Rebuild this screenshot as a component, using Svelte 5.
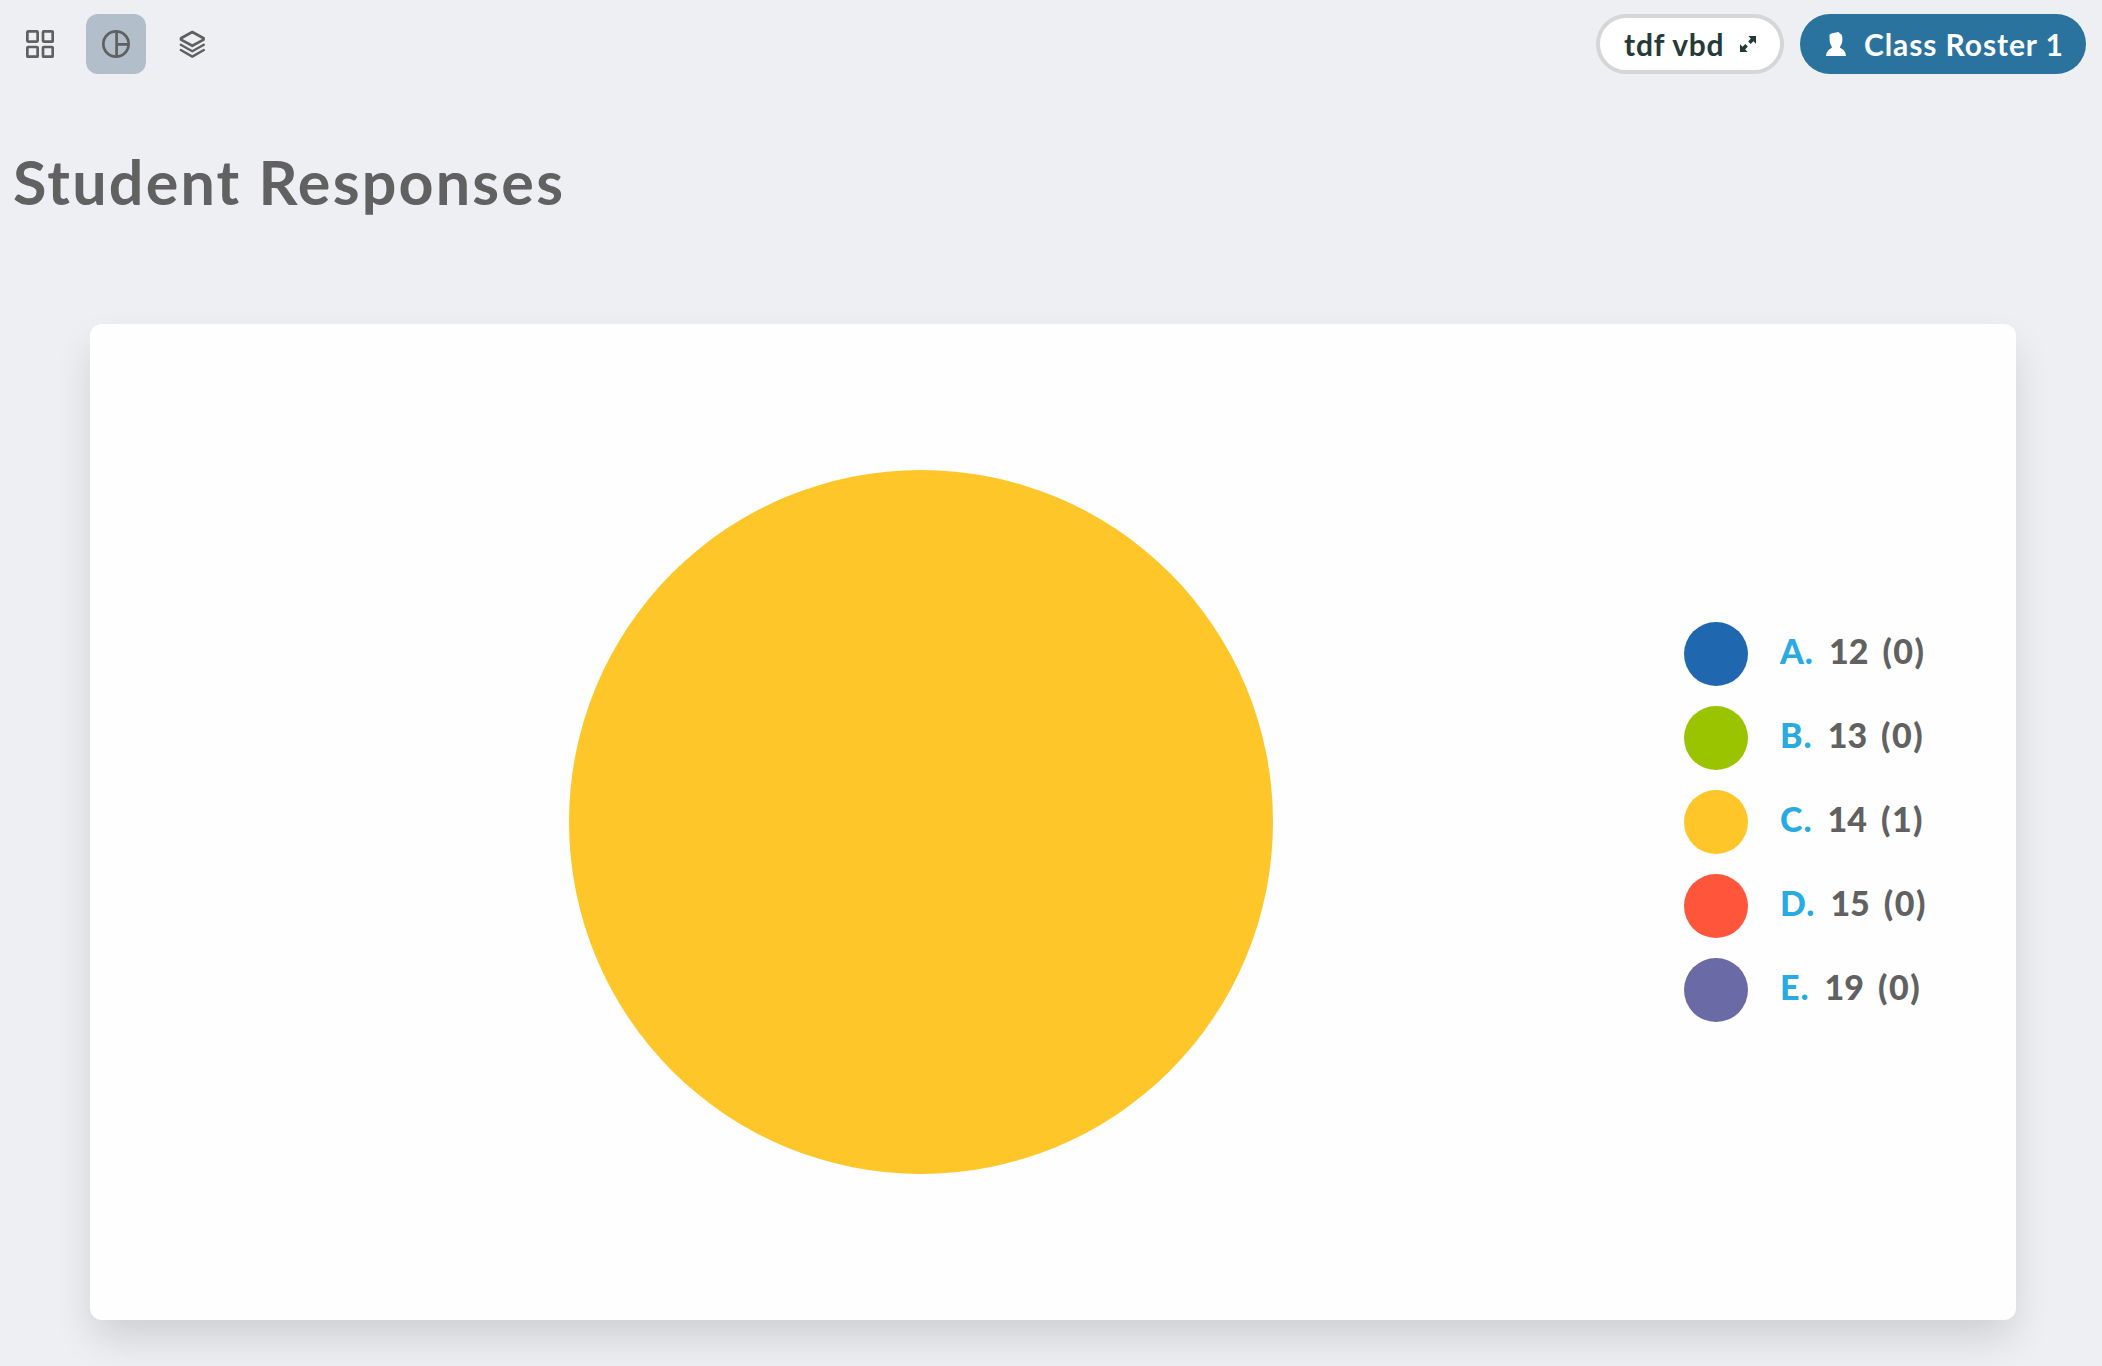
<script lang="ts">
  interface Answer {
    letter: string;
    label: string;
    count: number;
    color: string;
  }

  const roomCode = 'tdf vbd';
  const rosterName = 'Class Roster 1';

  const answers: Answer[] = [
    { letter: 'A', label: '12', count: 0, color: '#1f68b0' },
    { letter: 'B', label: '13', count: 0, color: '#9ac400' },
    { letter: 'C', label: '14', count: 1, color: '#ffc62a' },
    { letter: 'D', label: '15', count: 0, color: '#ff553b' },
    { letter: 'E', label: '19', count: 0, color: '#6a6aa6' }
  ];

  const views = ['grid', 'chart', 'stack'];
  let view = $state('chart');

  const total = $derived(answers.reduce((sum, a) => sum + a.count, 0));

  function pieBackground(rows: Answer[], sum: number): string {
    let at = 0;
    const stops = rows
      .filter((row) => row.count > 0)
      .map((row) => {
        const start = at;
        at += (row.count / sum) * 100;
        return `${row.color} ${start}% ${at}%`;
      });
    return `conic-gradient(${stops.join(', ')})`;
  }
</script>

<div class="page">
  <header class="topbar">
    <nav class="views">
      {#each views as name}
        <button class="view" class:active={view === name} aria-label={name} onclick={() => (view = name)}>
          <svg width="28" height="28" viewBox="0 0 28 28" fill="none" stroke="#606060" stroke-width="2.7">
            {#if name === 'grid'}
              <rect x="1.35" y="1.35" width="10.3" height="10.3" rx="0.8" />
              <rect x="17" y="1.35" width="9.7" height="10.3" rx="0.8" />
              <rect x="1.35" y="17" width="10.3" height="9.7" rx="0.8" />
              <rect x="17" y="17" width="9.7" height="9.7" rx="0.8" />
            {:else if name === 'chart'}
              <circle cx="14" cy="14" r="12.65" />
              <path d="M14.6 1.5v25M14.6 14.3h12" />
            {:else}
              <g stroke-linejoin="round" stroke-linecap="round">
                <path d="M14.3 2L25.6 8.2V9.6L14.3 15.8L3 9.6V8.2Z" />
                <path d="M2.8 14.8L14.3 21.2L25.8 14.8" stroke-width="2.4" />
                <path d="M2.8 20L14.3 26.6L25.8 20" stroke-width="2.4" />
              </g>
            {/if}
          </svg>
        </button>
      {/each}
    </nav>
    <div class="pills">
      <button class="pill room">
        <span class="room-code">{roomCode}</span>
        <svg width="16" height="16" viewBox="0 0 16 16" fill="#263a3a">
          <path d="M8.3 0H16V7.700L13.500 5.200L10.600 8L8.200 5.600L10.800 2.500Z" />
          <path d="M7.700 16H0V8.300L2.500 10.800L5.400 8L7.800 10.400L5.200 13.500Z" />
        </svg>
      </button>
      <button class="pill roster">
        <svg width="20" height="24" viewBox="0 0 20 24" fill="#fff">
          <path d="M3.500 3C5 .8 9 1 12.500 0L14 1.500C16.500 2.500 16.500 5 16.300 9.500C16 12 14.500 13.500 13.800 15.500C17 17.500 19.500 18.500 20 24H0C.5 18.500 3.500 17.500 6 15.500C5.500 13.500 4 12 3.700 9.500Z" />
        </svg>
        <span class="roster-name">{rosterName}</span>
      </button>
    </div>
  </header>

  <h1>Student Responses</h1>

  <section class="card">
    <div class="chart">
      <div class="pie" style:background={pieBackground(answers, total)}></div>
    </div>
    <ul class="legend">
      {#each answers as answer}
        <li>
          <span class="dot" style:background={answer.color}></span>
          <span class="letter">{answer.letter}.</span>
          <span class="label">{answer.label}</span>
          <span class="count">({answer.count})</span>
        </li>
      {/each}
    </ul>
  </section>
</div>

<style>
  :global(body) {
    background: #eeeff3;
  }

  .page {
    height: 1366px;
    overflow: hidden;
    box-sizing: border-box;
    font-family: Lato, 'Open Sans', sans-serif;
    color: #616161;
  }

  .topbar {
    display: flex;
    justify-content: space-between;
    padding: 14px 16px 0 10px;
  }

  .views,
  .pills {
    display: flex;
    gap: 16px;
  }

  button {
    border: none;
    background: none;
    padding: 0;
    font: inherit;
    cursor: pointer;
  }

  .view {
    width: 60px;
    height: 60px;
    display: flex;
    align-items: center;
    justify-content: center;
    border-radius: 12px;
  }

  .view.active {
    background: #b2bfcb;
  }

  .pill {
    display: flex;
    align-items: center;
    box-sizing: border-box;
    height: 60px;
    border-radius: 30px;
    font-size: 30px;
    font-weight: 700;
    line-height: 36px;
    white-space: nowrap;
  }

  .room {
    width: 188px;
    padding: 0 24px;
    justify-content: space-between;
    border: 4px solid #d5d6d6;
    background: #fff;
    color: #263a3a;
  }

  .room-code {
    letter-spacing: 0.8px;
  }

  .roster {
    width: 286px;
    padding-left: 26px;
    gap: 18px;
    background: #29739e;
    color: #fff;
  }

  .roster-name {
    letter-spacing: 0.9px;
  }

  h1 {
    margin: 72px 0 0 13px;
    font-size: 61px;
    line-height: 72px;
    font-weight: 700;
    letter-spacing: 2.2px;
  }

  .card {
    display: flex;
    align-items: center;
    box-sizing: border-box;
    width: 1926px;
    height: 996px;
    margin: 106px 0 0 90px;
    background: #fefefe;
    border-radius: 12px;
    box-shadow: 0 20px 40px -4px rgba(0, 0, 0, 0.14);
  }

  .chart {
    width: 1594px;
    padding-left: 479px;
    box-sizing: border-box;
  }

  .pie {
    width: 704px;
    height: 704px;
    border-radius: 50%;
  }

  .legend {
    display: flex;
    flex-direction: column;
    gap: 20px;
    margin: 0;
    padding: 0;
    list-style: none;
    font-size: 34px;
    line-height: 58px;
    font-weight: 900;
  }

  .legend li {
    display: flex;
    height: 64px;
  }

  .dot {
    width: 64px;
    height: 64px;
    margin-right: 32px;
    border-radius: 50%;
  }

  .letter {
    color: #29abe2;
    letter-spacing: 1px;
    margin-right: 15px;
  }

  .label {
    margin-right: 14px;
  }

  .count {
    letter-spacing: 1.5px;
  }
</style>
